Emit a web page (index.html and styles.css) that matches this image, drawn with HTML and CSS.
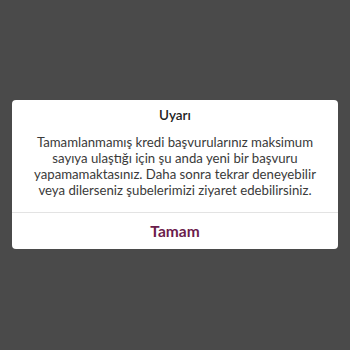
FILE: index.html
```html
<!DOCTYPE html>
<html lang="tr">
<head>
  <meta charset="UTF-8">
  <meta name="viewport" content="width=device-width, initial-scale=1.0">
  <title>Uyarı</title>
  <link rel="stylesheet" href="styles.css">
</head>
<body>
  <!-- Alert dialog -->
  <div class="overlay">
    <div class="dialog">
      <div class="dialog-body">
        <h2 class="dialog-title">Uyarı</h2>
        <p class="dialog-text">Tamamlanmamış kredi başvurularınız maksimum sayıya ulaştığı için şu anda yeni bir başvuru yapamamaktasınız. Daha sonra tekrar deneyebilir veya dilerseniz şubelerimizi ziyaret edebilirsiniz.</p>
      </div>
      <button class="dialog-button">Tamam</button>
    </div>
  </div>
</body>
</html>
```

FILE: styles.css
```css
/* General Styling */
body {
  font-family: Lato, "Noto Sans", sans-serif;
  margin: 0;
  background-color: #4a4a4a;
  color: #333;
}

h2, p {
  margin: 0;
}

.overlay {
  height: 350px;
  display: flex;
  align-items: center;
  padding: 0 12px;
}

.dialog {
  flex: 1;
  margin-bottom: 2px;
  background-color: #ffffff;
  border-radius: 4px;
  display: flex;
  flex-direction: column;
}

.dialog-body {
  padding: 6px 12px 14px;
  text-align: center;
  border-bottom: 1px solid #e3e3e3;
}

.dialog-title {
  font-size: 13.5px;
  font-weight: 600;
  color: #222;
  line-height: 18px;
  margin-bottom: 10px;
}

.dialog-text {
  font-size: 13.2px;
  line-height: 16px;
  color: #3a3a3a;
}

.dialog-button {
  font-family: inherit;
  font-size: 15.5px;
  font-weight: 700;
  color: #6b1d4c;
  background: none;
  border: none;
  padding: 0;
  height: 36px;
  cursor: pointer;
}
```
